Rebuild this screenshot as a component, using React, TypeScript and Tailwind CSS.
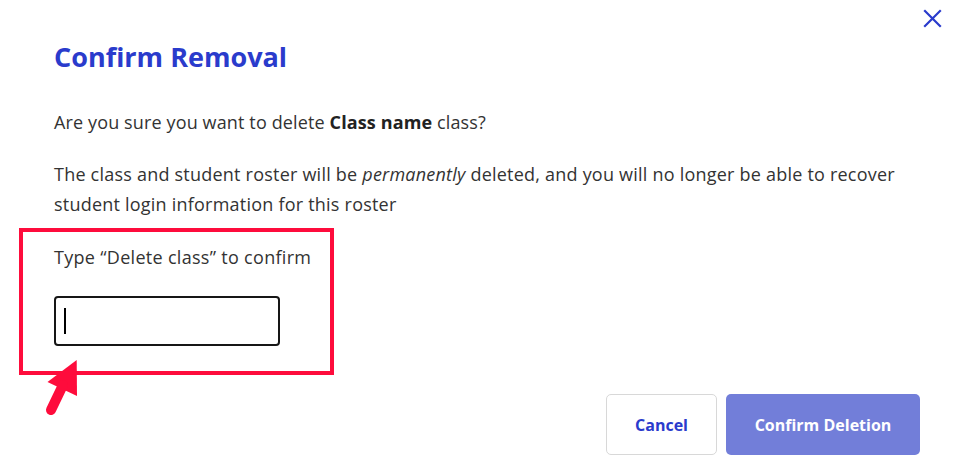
import React from "react";

function CloseIcon() {
  return (
    <svg width="19" height="19" viewBox="0 0 19 19" fill="none">
      <path d="M2 2L17 17M17 2L2 17" stroke="#2a3bcc" strokeWidth="2.2" strokeLinecap="square" />
    </svg>
  );
}

function PointerArrow() {
  return (
    <svg width="100" height="90" viewBox="0 0 100 90" fill="none">
      <polygon points="66.7,20 37.5,42 67,56" fill="#fe0c3c" />
      <line x1="53" y1="45" x2="41" y2="70" stroke="#fe0c3c" strokeWidth="10" strokeLinecap="round" />
    </svg>
  );
}

export default function App() {
  return (
    <div
      className="relative w-[957px] h-[476px] overflow-hidden bg-white text-[#333333]"
      style={{ fontFamily: "'Open Sans', Lato, sans-serif" }}
    >
      <button className="absolute left-[923px] top-[9px]" aria-label="Close">
        <CloseIcon />
      </button>

      <div className="pl-[54px] pr-[37px] pt-[39px]">
        <h1 className="text-[27px] leading-[36px] font-bold text-[#2a3bcc]">Confirm Removal</h1>

        <p className="mt-[33px] text-[18px] leading-[28px] tracking-[0.13px]">
          Are you sure you want to delete <strong className="font-bold text-[#222]">Class name</strong> class?
        </p>

        <p className="mt-[24px] text-[18px] leading-[29.5px] tracking-[0.22px] w-[866px]">
          The class and student roster will be <em>permanently</em> deleted, and you will no longer be able to recover student login information for this roster
        </p>

        <label className="block mt-[24px] text-[18px] leading-[28px] tracking-[0.3px]">Type “Delete class” to confirm</label>

        <div className="mt-[25px] w-[226px] h-[50px] rounded-[4px] border-2 border-[#161616] flex items-center">
          <div className="ml-[8px] w-[2px] h-[26px] bg-black" />
        </div>

        <div className="mt-[48px] flex justify-end gap-[9px]">
          <button className="w-[111px] h-[61px] rounded-[5px] border border-[#d8d8d8] bg-white text-[16px] font-bold text-[#2a3bcc]">
            Cancel
          </button>
          <button className="w-[194px] h-[61px] rounded-[5px] bg-[#727ed9] text-[16px] font-bold text-white">
            Confirm Deletion
          </button>
        </div>
      </div>

      {/* annotation overlay */}
      <div className="absolute left-[19px] top-[228px] w-[315px] h-[147px] border-[4px] border-[#fe0c3c] pointer-events-none" />
      <div className="absolute left-[10px] top-[340px] pointer-events-none">
        <PointerArrow />
      </div>
    </div>
  );
}
